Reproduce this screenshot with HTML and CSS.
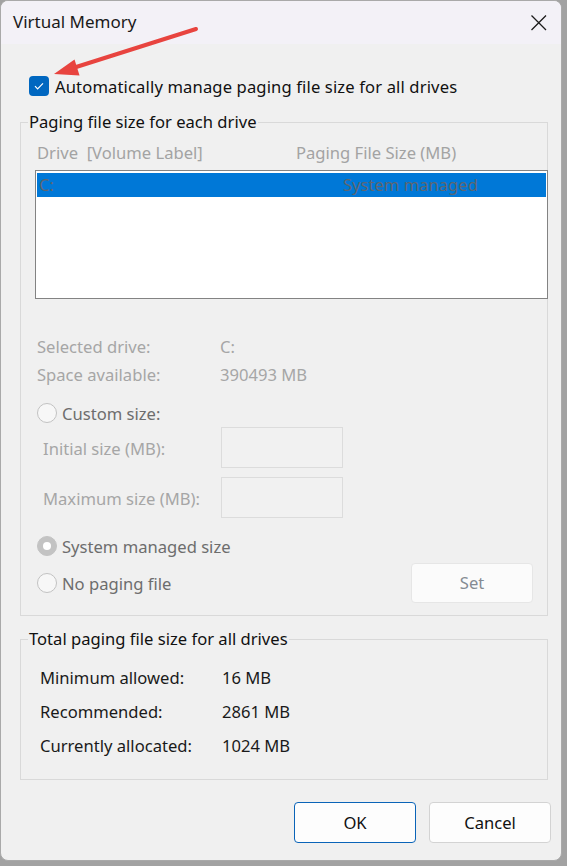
FILE: index.html
```html
<!DOCTYPE html>
<html>
<head>
<meta charset="utf-8">
<link rel="stylesheet" href="styles.css">
</head>
<body>
<div class="window">
  <div class="titlebar">
    <span class="title">Virtual Memory</span>
    <span class="close">
      <svg width="18" height="18" viewBox="0 0 18 18"><path d="M1.5 1.5 L16 16 M16 1.5 L1.5 16" stroke="#1b1b1b" stroke-width="1.3" fill="none"/></svg>
    </span>
  </div>
  <div class="content">
    <div class="auto-row">
      <span class="checkbox">
        <svg width="20" height="20" viewBox="0 0 20 20"><path d="M6 10.2 L8.6 12.8 L14 7.4" stroke="#ffffff" stroke-width="1.2" fill="none"/></svg>
      </span>
      <span class="auto-label">Automatically manage paging file size for all drives</span>
    </div>

    <fieldset class="group group-drive">
      <legend>Paging file size for each drive</legend>
      <div class="list-header">
        <span class="hcol-drive">Drive&nbsp; [Volume Label]</span>
        <span class="hcol-size">Paging File Size (MB)</span>
      </div>
      <div class="listbox">
        <div class="list-row selected">
          <span class="col-drive">C:</span>
          <span class="col-size">System managed</span>
        </div>
      </div>
      <div class="info-row first">
        <span class="info-label">Selected drive:</span>
        <span class="info-value">C:</span>
      </div>
      <div class="info-row second">
        <span class="info-label">Space available:</span>
        <span class="info-value">390493 MB</span>
      </div>
      <div class="radio-row custom">
        <span class="radio"></span>
        <span class="radio-label">Custom size:</span>
      </div>
      <div class="size-row initial">
        <span class="size-label">Initial size (MB):</span>
        <span class="size-input"></span>
      </div>
      <div class="size-row maximum">
        <span class="size-label">Maximum size (MB):</span>
        <span class="size-input"></span>
      </div>
      <div class="radio-row sysman">
        <span class="radio checked"><span class="dot"></span></span>
        <span class="radio-label">System managed size</span>
      </div>
      <div class="last-row">
        <div class="radio-inline">
          <span class="radio"></span>
          <span class="radio-label">No paging file</span>
        </div>
        <span class="set-btn">Set</span>
      </div>
    </fieldset>

    <fieldset class="group group-total">
      <legend>Total paging file size for all drives</legend>
      <div class="total-row first">
        <span class="total-label">Minimum allowed:</span>
        <span class="total-value">16 MB</span>
      </div>
      <div class="total-row">
        <span class="total-label">Recommended:</span>
        <span class="total-value">2861 MB</span>
      </div>
      <div class="total-row">
        <span class="total-label">Currently allocated:</span>
        <span class="total-value">1024 MB</span>
      </div>
    </fieldset>

    <div class="buttons">
      <span class="btn btn-ok">OK</span>
      <span class="btn btn-cancel">Cancel</span>
    </div>
  </div>

  <svg class="annotation" width="220" height="90" viewBox="0 0 220 90">
    <line x1="195" y1="28" x2="72" y2="67" stroke="#e8443f" stroke-width="4" stroke-linecap="round"/>
    <polygon points="53,73 73.5,58.5 78.5,74.5" fill="#e8443f"/>
  </svg>
</div>
</body>
</html>
```

FILE: styles.css
```css
html, body {
  margin: 0;
  padding: 0;
}
body {
  background: #a2a2a2;
  width: 567px;
  height: 866px;
  overflow: hidden;
  font-family: "Noto Sans", "Open Sans", sans-serif;
  font-size: 16.6px;
  line-height: 20px;
  color: #1a1a1a;
}
.window {
  position: relative;
  width: 562px;
  height: 861px;
  box-sizing: border-box;
  border: 1px solid #a9a9a9;
  border-radius: 8px;
  background: #f0f0f0;
  overflow: hidden;
}
.titlebar {
  height: 43px;
  background: #f3f1f7;
  display: flex;
  align-items: center;
  justify-content: space-between;
  padding: 0 12px 0 12px;
}
.title {
  font-size: 17px;
  color: #1a1a1a;
  margin-top: -1px;
}
.close {
  display: flex;
  width: 18px;
  height: 18px;
  margin-right: 1px;
}
.content {
  padding: 32px 0 0 19px;
}
.auto-row {
  display: flex;
  align-items: center;
  height: 20px;
  margin-left: 9px;
}
.checkbox {
  width: 20px;
  height: 20px;
  border-radius: 4px;
  background: #0067c0;
  display: flex;
}
.auto-label {
  margin-left: 6px;
  margin-top: 2px;
  color: #111;
  letter-spacing: 0.13px;
}

.group {
  margin: 0;
  min-width: 0;
  width: 528px;
  box-sizing: border-box;
  border: 1px solid #d9d9d9;
  padding: 0 0 0 16px;
}
.group legend {
  padding: 0 1px;
  margin-left: -9px;
  line-height: 20px;
  color: #111;
}
.group-drive {
  margin-top: 16px;
  padding-top: 11px;
  padding-bottom: 12px;
}
.list-header {
  display: flex;
  height: 20px;
  color: #a3a3a3;
}
.hcol-drive {
  width: 259px;
}
.listbox {
  margin-top: 7px;
  margin-left: -2px;
  width: 513px;
  height: 129px;
  box-sizing: border-box;
  border: 1px solid #838383;
  background: #ffffff;
  padding: 2px 1px 1px 1px;
}
.list-row {
  display: flex;
  height: 24px;
  align-items: center;
  padding-left: 2px;
}
.list-row.selected {
  background: #0078d7;
  color: #5f6670;
}
.col-drive {
  width: 304px;
}
.info-row {
  display: flex;
  height: 20px;
  color: #a6a6a6;
}
.info-row.first {
  margin-top: 38px;
}
.info-row.second {
  margin-top: 8px;
}
.info-label {
  width: 183px;
}
.radio-row,
.radio-inline {
  display: flex;
  align-items: center;
  height: 20px;
}
.radio-row.custom {
  margin-top: 18px;
}
.radio-row.sysman {
  margin-top: 18px;
}
.radio {
  width: 20px;
  height: 20px;
  box-sizing: border-box;
  border: 1px solid #c2c2c2;
  border-radius: 50%;
  background: #f7f7f7;
  display: flex;
  align-items: center;
  justify-content: center;
}
.radio.checked {
  background: #c3c3c3;
  border-color: #c3c3c3;
}
.radio .dot {
  width: 8px;
  height: 8px;
  border-radius: 50%;
  background: #ffffff;
}
.radio-label {
  margin-left: 5px;
  margin-top: 2px;
  color: #6d6d6d;
}
.size-row {
  display: flex;
  align-items: center;
  height: 41px;
  padding-left: 6px;
  color: #a6a6a6;
}
.size-row.initial {
  margin-top: 4px;
}
.size-row.maximum {
  margin-top: 9px;
}
.size-label {
  width: 178px;
  margin-top: 3px;
}
.size-input {
  width: 122px;
  height: 41px;
  box-sizing: border-box;
  border: 1px solid #dcdcdc;
  background: #f1f1f1;
}
.last-row {
  margin-top: 7px;
  height: 40px;
  display: flex;
  align-items: center;
  justify-content: space-between;
  padding-right: 14px;
}
.set-btn {
  width: 122px;
  height: 40px;
  box-sizing: border-box;
  border: 1px solid #e6e6e6;
  border-radius: 4px;
  background: #fbfbfb;
  color: #858b93;
  display: flex;
  align-items: center;
  justify-content: center;
}

.group-total {
  margin-top: 13px;
  padding-top: 19px;
  padding-bottom: 23px;
  padding-left: 19px;
}
.group-total legend {
  margin-left: -12px;
}
.total-row {
  display: flex;
  height: 20px;
  margin-top: 14px;
}
.total-row.first {
  margin-top: 0;
}
.total-label {
  width: 182px;
}
.buttons {
  margin-top: 22px;
  display: flex;
  justify-content: flex-end;
  gap: 13px;
  width: 531px;
}
.btn {
  width: 122px;
  height: 41px;
  box-sizing: border-box;
  border-radius: 4px;
  background: #fdfdfd;
  display: flex;
  align-items: center;
  justify-content: center;
  color: #111;
}
.btn-ok {
  border: 1px solid #0a64b8;
}
.btn-cancel {
  border: 1px solid #d3d3d3;
}
.annotation {
  position: absolute;
  left: 0;
  top: 0;
}
```
